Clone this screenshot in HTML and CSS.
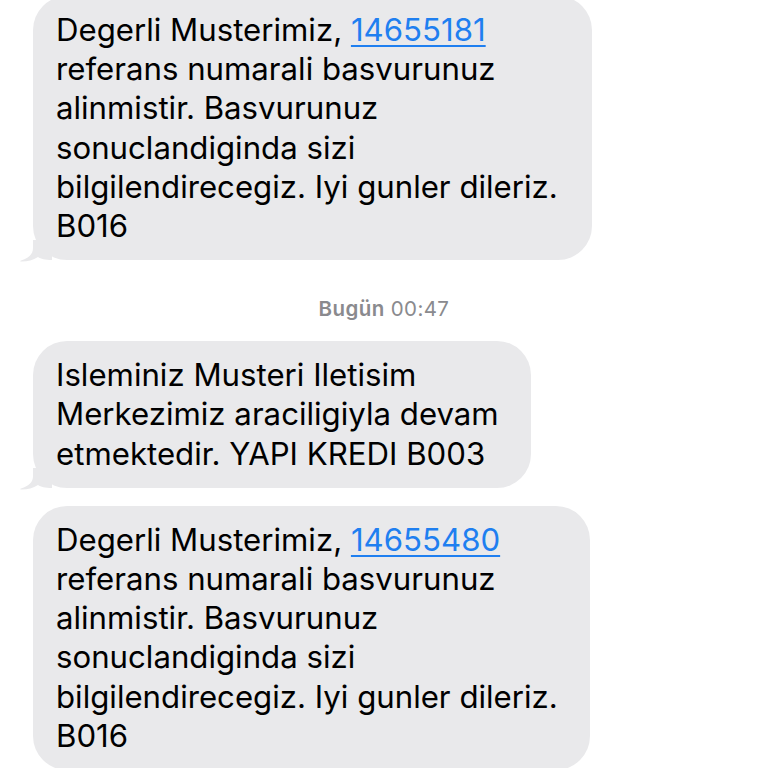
FILE: index.html
```html
<!doctype html>
<html>
<head>
<meta charset="utf-8">
<title>Mesajlar</title>
<link rel="stylesheet" href="styles.css">
</head>
<body>
	<div class="thread">
		<div class="bubble first">
			Degerli Musterimiz, <a href="#">14655181</a><br>
			referans numarali basvurunuz<br>
			alinmistir. Basvurunuz<br>
			sonuclandiginda sizi<br>
			bilgilendirecegiz. Iyi gunler dileriz.<br>
			B016
			<svg class="tail" width="32" height="22" viewBox="0 0 32 22"><path d="M13 0 L13 8 C13 14 9 18 1 20.5 C0 21 0 21.5 1.5 21.5 C8 21.5 13 20 18 17 C21 19 25 20 32 20 L32 0 Z"/></svg>
		</div>

		<div class="time"><b>Bugün</b> 00:47</div>

		<div class="bubble">
			Isleminiz Musteri Iletisim<br>
			Merkezimiz araciligiyla devam<br>
			etmektedir. YAPI KREDI B003
			<svg class="tail" width="32" height="22" viewBox="0 0 32 22"><path d="M13 0 L13 8 C13 14 9 18 1 20.5 C0 21 0 21.5 1.5 21.5 C8 21.5 13 20 18 17 C21 19 25 20 32 20 L32 0 Z"/></svg>
		</div>

		<div class="bubble next">
			Degerli Musterimiz, <a href="#">14655480</a><br>
			referans numarali basvurunuz<br>
			alinmistir. Basvurunuz<br>
			sonuclandiginda sizi<br>
			bilgilendirecegiz. Iyi gunler dileriz.<br>
			B016
		</div>
	</div>
</body>
</html>
```

FILE: styles.css
```css
*{
	margin: 0;
	padding: 0;
}
body{
	background: #fff;
	font-family: Inter, "Noto Sans", sans-serif;
	overflow: hidden;
	height: 768px;
}
.thread{
	display: flex;
	flex-direction: column;
	align-items: flex-start;
	padding-left: 33px;
}
.bubble{
	position: relative;
	background: #e9e9eb;
	border-radius: 34px;
	padding: 15px 32px 14px 23px;
	font-size: 31.2px;
	line-height: 39.2px;
	color: #000;
}
.bubble.first{
	margin-top: -4px;
	padding-right: 34px;
}
.bubble.next{
	margin-top: 18px;
}
.bubble a{
	color: #1f7ff0;
	text-decoration: underline;
	text-underline-offset: 4px;
	text-decoration-thickness: 2px;
}
.tail{
	position: absolute;
	left: -13px;
	bottom: -2px;
	fill: #e9e9eb;
}
.time{
	align-self: center;
	margin: 37px 0 20px -33px;
	font-size: 20.5px;
	line-height: 24px;
	letter-spacing: 0.4px;
	color: #8a8a8e;
}
.time b{
	font-weight: 600;
}
```
